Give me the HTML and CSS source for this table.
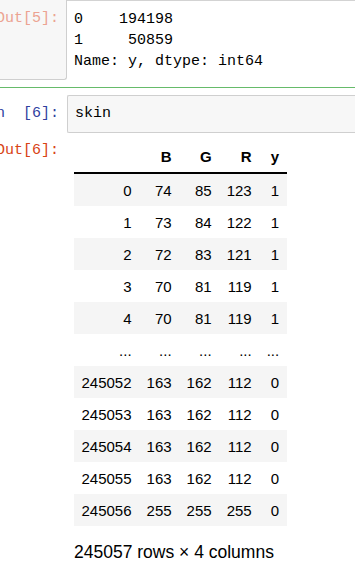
FILE: index.html
```html
<!DOCTYPE html>
<html lang="en">
<head>
  <meta charset="UTF-8">
  <meta name="viewport" content="width=device-width, initial-scale=1.0">
  <title>skin.ipynb</title>
  <link rel="stylesheet" href="styles.css">
</head>
<body>
  <div class="notebook">

    <div class="cell">
      <div class="output-row">
        <div class="prompt out-prompt faded"><span>Out[5]:</span></div>
        <pre class="output-text">0    194198
1     50859
Name: y, dtype: int64</pre>
      </div>
    </div>

    <div class="cell selected">
      <div class="input-row">
        <div class="prompt in-prompt"><span>In&nbsp;&nbsp;[6]:</span></div>
        <div class="input-area">skin</div>
      </div>

      <div class="output-row">
        <div class="prompt out-prompt"><span>Out[6]:</span></div>
        <div class="output-html">
          <table class="dataframe">
            <thead>
              <tr><th></th><th>B</th><th>G</th><th>R</th><th>y</th></tr>
            </thead>
            <tbody>
              <tr><th>0</th><td>74</td><td>85</td><td>123</td><td>1</td></tr>
              <tr><th>1</th><td>73</td><td>84</td><td>122</td><td>1</td></tr>
              <tr><th>2</th><td>72</td><td>83</td><td>121</td><td>1</td></tr>
              <tr><th>3</th><td>70</td><td>81</td><td>119</td><td>1</td></tr>
              <tr><th>4</th><td>70</td><td>81</td><td>119</td><td>1</td></tr>
              <tr><th>...</th><td>...</td><td>...</td><td>...</td><td>...</td></tr>
              <tr><th>245052</th><td>163</td><td>162</td><td>112</td><td>0</td></tr>
              <tr><th>245053</th><td>163</td><td>162</td><td>112</td><td>0</td></tr>
              <tr><th>245054</th><td>163</td><td>162</td><td>112</td><td>0</td></tr>
              <tr><th>245055</th><td>163</td><td>162</td><td>112</td><td>0</td></tr>
              <tr><th>245056</th><td>255</td><td>255</td><td>255</td><td>0</td></tr>
            </tbody>
          </table>
          <p class="df-shape">245057 rows × 4 columns</p>
        </div>
      </div>
    </div>

  </div>
</body>
</html>
```

FILE: styles.css
```css
body {
  margin: 0;
  background-color: white;
  color: #000;
  font-family: 'Liberation Sans', Arial, sans-serif;
  overflow: hidden;
}

.notebook {
  width: 355px;
}

.cell {
  margin-bottom: 7px;
}

.cell.selected {
  border-top: 1px solid #66bb6a;
}

.input-row,
.output-row {
  display: flex;
}

/* prompts overflow to the left, like a notebook scrolled sideways */
.prompt {
  flex: 0 0 67px;
  min-width: 0;
  box-sizing: border-box;
  display: flex;
  justify-content: flex-end;
  align-items: flex-start;
  padding-right: 8px;
  font-family: 'Liberation Mono', 'Courier New', monospace;
  font-size: 15px;
  line-height: 22px;
  white-space: nowrap;
}

.prompt span {
  flex: none;
}

.in-prompt {
  color: #303f9f;
  padding-top: 8px;
}

.out-prompt {
  color: #d84315;
  padding-top: 3px;
}

.out-prompt.faded {
  color: #eca392;
  background-color: #f7f7f7;
  border-right: 1px solid #cfcfcf;
  border-bottom: 1px solid #cfcfcf;
  border-bottom-right-radius: 3px;
  padding-top: 8px;
  padding-right: 7px;
  line-height: 21px;
}

.output-text {
  flex: 1;
  margin: 0;
  padding: 8px 7px;
  border-top: 1px solid #d3d3d3;
  font-family: 'Liberation Mono', 'Courier New', monospace;
  font-size: 15px;
  line-height: 21px;
}

.input-row {
  padding-top: 7px;
}

.input-area {
  flex: 1;
  background-color: #f7f7f7;
  border: 1px solid #cfcfcf;
  border-right: none;
  border-radius: 2px 0 0 2px;
  padding: 7px;
  font-family: 'Liberation Mono', 'Courier New', monospace;
  font-size: 15px;
  line-height: 22px;
}

.input-row + .output-row {
  margin-top: 4px;
}

.output-html {
  flex: 1;
  padding: 3px 7px 0;
}

.dataframe {
  border-collapse: collapse;
  border-spacing: 0;
  font-size: 15px;
}

.dataframe th,
.dataframe td {
  padding: 7.5px;
  text-align: right;
  vertical-align: middle;
  line-height: 17px;
  white-space: nowrap;
}

.dataframe thead th {
  font-weight: bold;
}

.dataframe thead tr {
  border-bottom: 2px solid #000;
}

.dataframe tbody th {
  font-weight: normal;
}

.dataframe tbody tr:nth-child(odd) {
  background-color: #f5f5f5;
}

.df-shape {
  margin: 15px 0 0;
  font-size: 17.5px;
  line-height: 22px;
}
```
